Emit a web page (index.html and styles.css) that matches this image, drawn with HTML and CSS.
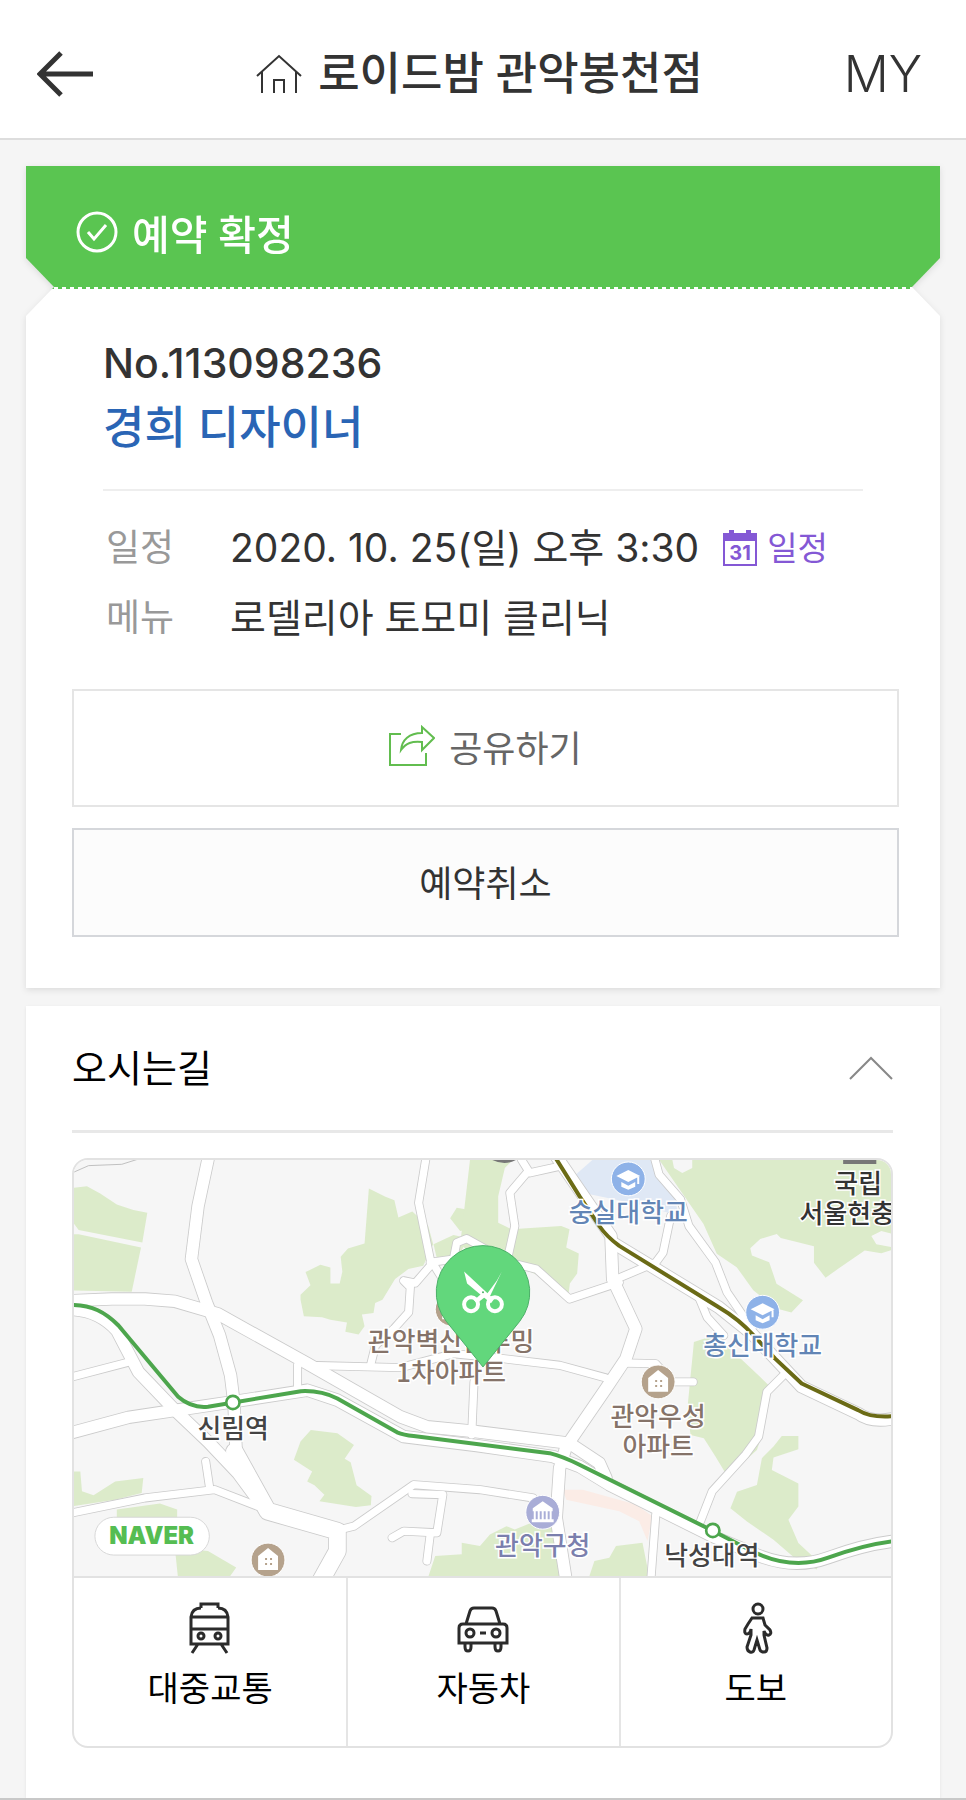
FILE: index.html
```html
<!DOCTYPE html>
<html lang="ko">

<head>
    <meta charset="UTF-8">
    <meta name="viewport" content="width=device-width, initial-scale=1">
    <title>로이드밤 관악봉천점 - 예약 확정</title>
    <link rel="stylesheet" href="styles.css">
</head>

<body>
    <header class="top-bar">
        <a href="#" class="back" aria-label="뒤로">
            <svg width="56" height="46" viewBox="0 0 56 46" fill="none" stroke="#333" stroke-width="5">
                <path d="M24 2 3 23l21 21M4 23h52" />
            </svg>
        </a>
        <h1 class="shop-name">
            <svg width="46" height="42" viewBox="0 0 46 42" fill="none" stroke="#333" stroke-width="2">
                <path d="M1 23 23 3l22 20M6 19v21M40 19v21M18 40V27h10v13" />
            </svg>
            <span>로이드밤 관악봉천점</span>
        </h1>
        <a href="#" class="my">MY</a>
    </header>

    <main class="content">
        <!-- 예약 정보 -->
        <section class="ticket">
            <div class="status">
                <svg width="42" height="42" viewBox="0 0 42 42" fill="none" stroke="#fff" stroke-width="3">
                    <circle cx="21" cy="21" r="19" />
                    <path d="m12 21 6 7 12-14" />
                </svg>
                <span>예약 확정</span>
            </div>
            <div class="ticket-body">
                <div class="summary">
                    <p class="number">No.113098236</p>
                    <p class="designer">경희 디자이너</p>
                </div>
                <dl class="detail">
                    <dt>일정</dt>
                    <dd>
                        <span>2020. 10. 25(일) 오후 3:30</span>
                        <a href="#" class="calendar">
                            <svg width="34" height="36" viewBox="0 0 34 36">
                                <path d="M0 3h6V0h5v3h12V0h5v3h6v33H0zM2 11v23h30V11z" fill="#8458d5" fill-rule="evenodd" />
                                <text x="17" y="30" class="calendar-day">31</text>
                            </svg>
                            일정
                        </a>
                    </dd>
                    <dt>메뉴</dt>
                    <dd>로델리아 토모미 클리닉</dd>
                </dl>
                <button type="button" class="btn share">
                    <svg width="46" height="42" viewBox="0 0 46 42" fill="none" stroke="#62bd4f" stroke-width="2">
                        <path d="M12 9H1v31h36V28" />
                        <path d="M33 2 45 13 33 25v-8c-10-1-16 1-21 8 1-10 8-17 21-17z" />
                    </svg>
                    공유하기
                </button>
                <button type="button" class="btn cancel">예약취소</button>
            </div>
        </section>

        <!-- 오시는길 -->
        <section class="directions">
            <div class="directions-head">
                <h2>오시는길</h2>
                <button type="button" class="toggle" aria-label="접기">
                    <svg width="44" height="24" viewBox="0 0 44 24" fill="none" stroke="#888" stroke-width="2">
                        <path d="M1 23 22 2l21 21" />
                    </svg>
                </button>
            </div>
            <div class="map-box">
                <svg class="map" viewBox="0 0 821 418" role="img" aria-label="지도">
                    <defs>
                        <g id="wide-roads">
                            <path d="M442 10 410 160 390 320 435 450 475 550 508 670 518 750 526 920" />
                            <path d="M30 445 150 440 250 440 340 447 470 485 740 635 880 715 1020 795 1100 825 1250 840 1530 875 1620 935 1640 980" />
                            <path d="M30 472Q110 475 165 535L230 660 340 775 440 870 530 965 600 1060" />
                            <path d="M30 843 200 797 380 770 515 750 740 715 830 745 1030 855 1250 882 1480 915 1560 945 1650 1000 1960 1155 2080 1205Q2200 1260 2310 1220T2510 1170" />
                            <path d="M1490 10 1600 170 1655 250 1660 380 1730 530 1700 620 1640 710 1520 885 1500 950 1490 1100 1520 1290" />
                            <path d="M1660 270 1980 465 2080 545 2230 705 2400 785Q2440 815 2510 800" />
                        </g>
                        <g id="side-roads">
                            <path d="M30 675 210 628M30 1085 250 1040 460 1015 590 1065M433 930 445 1010M710 640V710" />
                            <path d="M740 640 1020 647 1180 605 1330 620 1500 640 1640 678" />
                            <path d="M930 640 945 580 1000 530 1045 480 1050 405 1030 385 1065 392 1110 340" />
                            <path d="M1098 10 1075 150 1110 320 1160 400M1110 330 1180 320 1190 270 1220 258 1350 330 1430 350 1530 440 1680 390" />
                            <path d="M840 1135 880 1125 1060 1000 1260 1015 1420 1040" />
                            <path d="M1055 1027 1148 1030 1130 1145 1030 1140 995 1160M1110 1150 1100 1230M1242 690 1235 850" />
                            <path d="M1405 55 1350 120 1365 220 1345 310M1385 20 1410 60 1500 40M1660 385 1790 330 1812 300 1835 190" />
                            <path d="M1785 10 1800 65 1865 140 1890 220 1970 330 2005 420 2080 530M1920 435 1945 495 1995 550" />
                            <path d="M1690 633 1790 635 1840 690 1903 690M2180 665 2125 720 2100 855 2060 910 1960 1020 1925 1110M1790 1090 1775 1290" />
                        </g>
                    </defs>
                    <rect width="821" height="418" fill="#f6f6f6" />
                    <g transform="translate(-12 -7) scale(.3333)">
                        <!-- 공원, 녹지 -->
                        <g fill="#dcebca">
                            <path d="M30 105 75 100 115 122 165 155 215 172 257 180 242 270 50 232 30 205z" />
                            <path d="M50 245 238 285 210 418 30 414V245z" />
                            <path d="m925 107 50 25 27 10 12 52 42-18 48 44 15 55-30 65-45 10-40 30-38 62-22 10-5 30-35 5 8 35-18 25-40-8 5-28-50-8-25-8-55-3-10-50 0-15 30-28-15-40 45-22 30 8 0 48 28 0 8-35-5-45 22-25 50-15z" />
                            <path d="m1260 95 0 130-60 10-30-38 20-32 30 5zM1120 275l60-28 45 10-30 55-65 6z" />
                            <path d="m1230 20 130 0-25 25-20 85 0 80 40 20 150-10 25 10-10 55 38 18-5 60-22 30-5 40-75-58-120-50-100-15-30-40z" />
                            <path d="m750 835 80 10 50 35-28 42 18 10 18 70 45 32-2 28-45 5-110-17 15-20-30-28-22-12 15-30-55-35 20-55z" />
                            <path d="m30 960 25 0 5 60 35 12 65-42 85-10-5 45-80 20-130 20zM165 1075l130-18 52 18v25H165zM340 1190l100 10 85 50-25 35H350z" />
                            <path d="M1800 20h710v270l-40 12-50-8-80 55-38 27-35-45 0-50-100-25-12-12-50 15-30 28 5 22 52 20 22 65 80 50-35 37-45-12-70-55-50-70-60-40-40-90z" />
                            <path d="m1905 570 60-20 60 50 80 75 30 30-20 130-20 60-55 50-40 20-30-50-35-55-40-10-10-75z" />
                            <path d="m2110 920 35-35 25-32 50 0 0 40-75 25-5 38 80 40 0 70-30 40 30 70 65 60-10 20-60-30-70-60-80-55-50-40 20-50 60-20z" />
                            <path d="m1105 1275 20-60 80-5 0-35 55 10 30-35 50-25 25 10 50-20 85 20 10 150zM1590 1275l15-45 45-10 20-35 80-10 20 100z" />
                        </g>
                        <path d="M1600 20h180l60 90 20 80-100-30-190-40-50-30z" fill="#dfe8f5" />
                        <path d="m1510 1015 60 0 160 45 50 35-15 75-25-60-60-30-160-35z" fill="#fbece6" />
                        <path d="M1840 20h60l0 25-30 15-25-15zM2440 250l30-15 40 10v40l-55-10z" fill="#f6f6f6" />
                        <!-- 도로 -->
                        <path d="M30 60 80 38 180 34 240 15" fill="none" stroke="#bfbfbf" stroke-width="3" />
                        <g class="casing">
                            <use href="#wide-roads" stroke-width="40" />
                            <path d="M520 900 620 1080 830 1140 830 1200 780 1290" stroke-width="56" />
                            <use href="#side-roads" stroke-width="27" />
                        </g>
                        <g class="road">
                            <use href="#wide-roads" stroke-width="35" />
                            <path d="M520 900 620 1080 830 1140 830 1200 780 1290" stroke-width="51" />
                            <use href="#side-roads" stroke-width="22" />
                        </g>
                        <!-- 지하철 -->
                        <g class="subway">
                            <path d="M1485 10 1560 130 1620 220Q1640 250 1680 280L1980 465Q2040 500 2085 550L2150 620 2230 695 2400 775Q2440 800 2510 793" stroke="#6b6b16" />
                            <path d="M30 458C90 458 130 480 170 520L350 735Q390 770 440 765L720 718Q780 715 830 740L1010 842Q1030 850 1060 853L1470 905Q1510 915 1560 940L1960 1138 2080 1200Q2200 1260 2310 1220T2510 1170" stroke="#4da64d" />
                            <circle cx="515" cy="752" r="20" />
                            <circle cx="1962" cy="1138" r="20" />
                        </g>
                        <path d="M1295 20h75q-35 20-75 0zM2355 20h100v13h-100z" fill="#777" />
                    </g>

                    <!-- 장소 아이콘 -->
                    <g id="school" transform="translate(557 19)">
                        <circle r="17" fill="#8eb2e8" stroke="#fff" stroke-width="1" />
                        <path d="m-12-3L0-9 12-3 0 3zM-7 3l7 4 7-4v5L0 11-7 8zM9-2h2v7H9z" fill="#fff" />
                    </g>
                    <use href="#school" x="135" y="134" />
                    <g id="apartment" transform="translate(587 223)">
                        <circle r="17" fill="#b5a28c" stroke="#fff" stroke-width="1" />
                        <path d="M-10 10V-4L0-12l10 8v14z" fill="#fff" />
                        <path d="M-3-2h2v2h-2zM2-2h2v2H2zM-3 3h2v2h-2zM2 3h2v2H2z" fill="#b5a28c" />
                    </g>
                    <use href="#apartment" x="-392" y="179" />
                    <use href="#apartment" x="-207" y="-73" />
                    <g transform="translate(471 354)">
                        <circle r="17" fill="#a9add7" stroke="#fff" stroke-width="1" />
                        <path d="m-10-4 10-7 10 7v3h-20zM-11 7h22v3h-22zM-9-1h2v8h-2zM-5-1h2v8h-2zM-1-1h2v8h-2zM3-1h2v8H3zM7-1h2v8H7z" fill="#fff" />
                    </g>

                    <!-- 지명 -->
                    <g class="place">
                        <text x="557" y="62" fill="#6285b5">숭실대학교</text>
                        <text x="692" y="196" fill="#6285b5">총신대학교</text>
                        <text x="788" y="33" fill="#333">국립</text>
                        <text x="777" y="63" fill="#333">서울현충</text>
                        <text x="379" y="192" fill="#857369">관악벽산블루밍</text>
                        <text x="379" y="223" fill="#857369">1차아파트</text>
                        <text x="160" y="279" fill="#444">신림역</text>
                        <text x="587" y="267" fill="#857369">관악우성</text>
                        <text x="587" y="297" fill="#857369">아파트</text>
                        <text x="471" y="397" fill="#7b7fad">관악구청</text>
                        <text x="641" y="407" fill="#444">낙성대역</text>
                    </g>

                    <!-- 매장 위치 -->
                    <g transform="translate(411 134)">
                        <path d="M0 74-37 28A47 47 0 1 1 37 28z" fill="#62d77c" stroke="#4caf68" />
                        <path d="M-19-22-16-10 8 10 11 6zM19-22 14-13 3 2 6 5z" fill="#fff" />
                        <path d="m0-1-9 8 3 3 9-7z" fill="#fff" />
                        <g fill="none" stroke="#fff" stroke-width="4">
                            <circle cx="-12" cy="11" r="7" />
                            <circle cx="12" cy="11" r="7" />
                        </g>
                        <circle cy="-1" r="1" fill="#4caf68" />
                    </g>

                    <rect x="21" y="359" width="115" height="38" rx="19" fill="#fff" stroke="#d8d8d8" />
                    <text x="78" y="386" class="naver">NAVER</text>
                </svg>
                <nav class="routes">
                    <a href="#">
                        <svg width="52" height="52" viewBox="0 0 52 52">
                            <path d="M17 6V2h17v4M17 6q-9 0-10 9v27h37V15q-1-9-10-9M7 15h37M7 27h37M14 42 8 51M37 42l6 9" />
                            <circle cx="17" cy="34" r="3" />
                            <circle cx="34" cy="34" r="3" />
                        </svg>
                        대중교통
                    </a>
                    <a href="#">
                        <svg width="52" height="52" viewBox="0 0 52 52">
                            <path d="m9 22 4-13q1-3 4-3h18q3 0 4 3l4 13M2 41V26q0-4 4-4h40q4 0 4 4v15zM8 41v4q0 4 3 4t3-4v-4M38 41v4q0 4 3 4t3-4v-4M23 31h6" />
                            <circle cx="13" cy="31" r="4" />
                            <circle cx="39" cy="31" r="4" />
                        </svg>
                        자동차
                    </a>
                    <a href="#">
                        <svg width="52" height="52" viewBox="0 0 52 52">
                            <circle cx="28" cy="7" r="5" />
                            <path d="M22 16h11l2 7 5 5q2 4-1 5t-5-4v4l3 13q0 4-3 4t-4-2l-3-10-3 10q-1 3-4 2t-3-5l4-12v-6q-1 5-4 5t-2-5l3-5z" />
                        </svg>
                        도보
                    </a>
                </nav>
            </div>
        </section>
    </main>
    <footer class="bottom-bar"></footer>
</body>

</html>
```

FILE: styles.css
```css
* {
    box-sizing: border-box;
}

body {
    margin: 0;
    background-color: #f5f5f5;
    color: #333;
    font-family: Inter, "Noto Sans CJK KR", sans-serif;
    font-size: 39px;
}

h1,
h2,
p,
dl,
dd {
    margin: 0;
}

a {
    color: inherit;
    text-decoration: none;
}

svg {
    flex: none;
    display: block;
}

/* 상단 바 */
.top-bar {
    display: grid;
    grid-template-columns: 100px 1fr 100px;
    align-items: center;
    height: 140px;
    padding: 10px 44px 0 37px;
    background-color: #fff;
    border-bottom: 2px solid #ddd;
}

.shop-name {
    display: flex;
    justify-content: center;
    align-items: center;
    gap: 16px;
    font-size: 45px;
    font-weight: 500;
    line-height: 60px;
    white-space: nowrap;
}

.my {
    font-size: 50px;
    font-weight: 300;
    text-align: right;
}

.content {
    padding: 26px 26px 0;
}

/* 예약 티켓 */
.ticket {
    filter: drop-shadow(0 2px 3px rgba(0, 0, 0, 0.1));
}

.status {
    display: flex;
    align-items: center;
    gap: 14px;
    height: 121px;
    padding: 10px 50px 0;
    background-color: #5ac551;
    color: #fff;
    font-size: 41px;
    font-weight: 500;
    clip-path: polygon(0 0, 100% 0, 100% 92px, calc(100% - 28px) 100%, 28px 100%, 0 92px);
}

.ticket-body {
    padding: 48px 41px 51px 46px;
    background-color: #fff;
    background-image: repeating-linear-gradient(to right, #5ac551 0 4px, #fff 4px 8px);
    background-repeat: no-repeat;
    background-size: 100% 2px;
    clip-path: polygon(28px 0, calc(100% - 28px) 0, 100% 29px, 100% 100%, 0 100%, 0 29px);
}

.summary {
    margin: 0 36px 0 31px;
    padding-bottom: 24px;
    border-bottom: 2px solid #eee;
}

.number {
    font-size: 41px;
    font-weight: 500;
    line-height: 56px;
}

.designer {
    color: #2a65b5;
    font-size: 45px;
    font-weight: 500;
    line-height: 74px;
}

.detail {
    display: grid;
    grid-template-columns: 124px 1fr;
    margin: 22px 0 36px 34px;
    line-height: 70px;
    white-space: nowrap;
}

.detail dt {
    color: #999;
    font-size: 37px;
}

.detail dd {
    display: flex;
    align-items: center;
    gap: 24px;
}

.calendar {
    display: flex;
    align-items: center;
    gap: 10px;
    color: #8458d5;
    font-size: 33px;
}

.calendar-day {
    fill: #8458d5;
    font-size: 20px;
    font-weight: 700;
    text-anchor: middle;
}

.btn {
    display: flex;
    justify-content: center;
    align-items: center;
    gap: 14px;
    width: 100%;
    padding: 0 0 4px;
    font-family: inherit;
    font-size: 36px;
}

.share {
    height: 118px;
    margin-bottom: 21px;
    border: 2px solid #e5e5e5;
    background-color: #fff;
    color: #666;
}

.cancel {
    height: 109px;
    border: 2px solid #d5d7db;
    background-color: #fcfcfc;
    color: #333;
}

/* 오시는길 */
.directions {
    margin-top: 18px;
    padding: 0 47px 50px 46px;
    background-color: #fff;
    box-shadow: 0 1px 3px rgba(0, 0, 0, 0.08);
}

.directions-head {
    display: flex;
    justify-content: space-between;
    align-items: center;
    height: 127px;
    margin-bottom: 25px;
    border-bottom: 3px solid #e8e8e8;
}

.directions-head h2 {
    padding-bottom: 6px;
    color: #000;
    font-size: 38px;
    font-weight: 400;
}

.toggle {
    padding: 0;
    border: 0;
    background: none;
}

.map-box {
    overflow: hidden;
    border: 2px solid #e2e2e2;
    border-radius: 16px;
}

.map {
    width: 100%;
    height: auto;
}

.casing,
.road,
.subway {
    fill: none;
    stroke-linejoin: round;
    stroke-linecap: round;
}

.casing {
    stroke: #cbcbcb;
}

.road {
    stroke: #fff;
}

.subway {
    stroke-width: 12px;
}

.subway circle {
    fill: #fff;
    stroke: #4da64d;
    stroke-width: 8px;
}

.place text {
    font-family: "Noto Sans CJK KR", sans-serif;
    font-size: 26px;
    font-weight: 500;
    text-anchor: middle;
    stroke: #fff;
    stroke-width: 3px;
    paint-order: stroke;
}

.naver {
    fill: #55bd52;
    font-size: 24px;
    font-weight: 900;
    text-anchor: middle;
}

.routes {
    display: grid;
    grid-template-columns: repeat(3, 1fr);
    border-top: 2px solid #e2e2e2;
}

.routes a {
    display: flex;
    flex-direction: column;
    align-items: center;
    gap: 10px;
    height: 168px;
    padding-top: 24px;
    color: #000;
    font-size: 34px;
    line-height: 50px;
}

.routes a + a {
    border-left: 2px solid #e5e5e5;
}

.routes svg {
    fill: none;
    stroke: #2b2b2b;
    stroke-width: 3px;
}

.bottom-bar {
    height: 3px;
    border-top: 2px solid #c8c8c8;
}
```
